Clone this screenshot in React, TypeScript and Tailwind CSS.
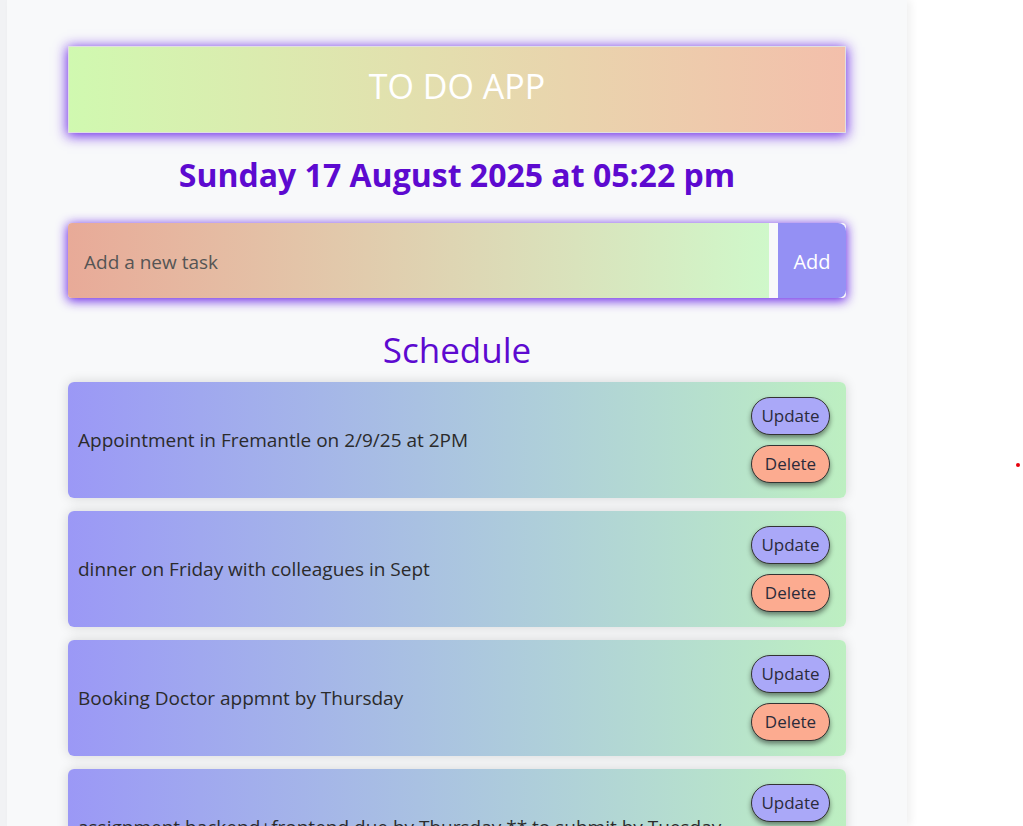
import React from 'react'

const tasks = [
  'Appointment in Fremantle on 2/9/25 at 2PM',
  'dinner on Friday with colleagues in Sept',
  'Booking Doctor appmnt by Thursday',
  'assignment backend+frontend due by Thursday ** to submit by Tuesday',
]

function TaskCard({ text }: { text: string }) {
  return (
    <li className="flex items-center justify-between rounded-md bg-gradient-to-r from-[#9b98f6] to-[#bdefc1] pl-[10px] pr-4 py-[15px] shadow-[0_0_12px_rgba(0,0,0,0.15)]">
      <span className="text-[19px] text-[#2b2b2b]">{text}</span>
      <div className="flex flex-col gap-[10px]">
        <button className="h-[38px] w-[79px] rounded-full border border-[#333] bg-[#aaa8f8] text-[17px] text-[#2b2b3b] shadow-[0_3px_5px_rgba(0,0,0,0.45)]">
          Update
        </button>
        <button className="h-[38px] w-[79px] rounded-full border border-[#333] bg-[#fcab90] text-[17px] text-[#2b2b3b] shadow-[0_3px_5px_rgba(0,0,0,0.45)]">
          Delete
        </button>
      </div>
    </li>
  )
}

export default function App() {
  return (
    <div className="flex h-[826px] overflow-hidden bg-white font-['Open_Sans',sans-serif]">
      <div className="w-[7px] shrink-0 bg-[#f1f2f4]" />
      <main className="w-[900px] shrink-0 bg-[#f8f9fa] px-[61px] pt-[46px] shadow-[4px_0_8px_rgba(0,0,0,0.06)]">
        {/* Header */}
        <header className="flex h-[87px] items-center justify-center border border-[#e0e0e0] bg-gradient-to-r from-[#d0f9b0] to-[#f3bfab] pb-[6px] shadow-[0_2px_12px_1px_rgba(100,30,230,0.95)]">
          <h1 className="text-[34px] text-white">TO DO APP</h1>
        </header>

        <h2 className="mt-[20px] text-center text-[32px] font-bold leading-[44px] text-[#5d0ad0]">
          Sunday 17 August 2025 at 05:22 pm
        </h2>

        {/* New task */}
        <form className="mt-[26px] flex h-[75px] rounded-sm shadow-[0_2px_11px_1px_rgba(100,30,230,0.95)]">
          <input
            className="flex-1 rounded-l-sm bg-gradient-to-r from-[#e8aa98] to-[#cff8ca] px-4 pt-[3px] text-[19px] text-[#333] placeholder:text-[#555] outline-none"
            placeholder="Add a new task"
          />
          <div className="w-[9px] bg-[#f8f9fa]" />
          <button type="button" className="w-[68px] rounded-r-lg bg-[#9490f4] pt-[3px] text-[20px] text-white">
            Add
          </button>
        </form>

        <h3 className="mt-[29px] text-center text-[35px] leading-[46px] text-[#5d0ad0]">Schedule</h3>

        <ul className="mt-[9px] flex flex-col gap-[13px]">
          {tasks.map((t) => (
            <TaskCard key={t} text={t} />
          ))}
        </ul>
      </main>
      <div className="relative flex-1">
        <span className="absolute left-[109px] top-[463px] h-[4px] w-[4px] rounded-full bg-red-600" />
      </div>
    </div>
  )
}
